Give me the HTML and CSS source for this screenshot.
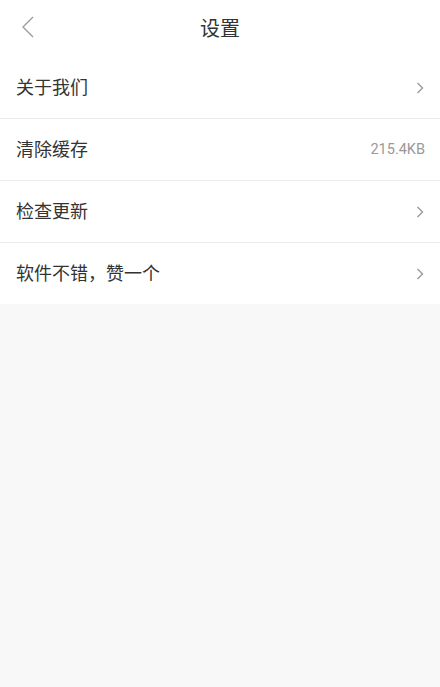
FILE: index.html
```html
<!DOCTYPE html>
<html lang="zh">
<head>
<meta charset="utf-8">
<link rel="stylesheet" href="styles.css">
</head>
<body>
<div class="page">
  <header class="header">
    <span class="back">
      <svg width="12" height="22" viewBox="0 0 12 22"><path d="M11 1 L1 11 L11 21" fill="none" stroke="#999" stroke-width="1.3"/></svg>
    </span>
    <h1 class="title">设置</h1>
  </header>
  <ul class="list">
    <li class="row"><span class="label">关于我们</span><span class="chev"><svg width="8" height="12" viewBox="0 0 8 12"><path d="M1.5 1 L6.5 6 L1.5 11" fill="none" stroke="#9a9a9a" stroke-width="1.4"/></svg></span></li>
    <li class="row"><span class="label">清除缓存</span><span class="value">215.4KB</span></li>
    <li class="row"><span class="label">检查更新</span><span class="chev"><svg width="8" height="12" viewBox="0 0 8 12"><path d="M1.5 1 L6.5 6 L1.5 11" fill="none" stroke="#9a9a9a" stroke-width="1.4"/></svg></span></li>
    <li class="row"><span class="label">软件不错，赞一个</span><span class="chev"><svg width="8" height="12" viewBox="0 0 8 12"><path d="M1.5 1 L6.5 6 L1.5 11" fill="none" stroke="#9a9a9a" stroke-width="1.4"/></svg></span></li>
  </ul>
</div>
</body>
</html>
```
FILE: styles.css
```css
html, body {
  margin: 0;
  padding: 0;
  background: #f8f8f8;
  font-family: Roboto, "Noto Sans CJK SC", sans-serif;
}
.page {
  min-height: 687px;
  background: #f8f8f8;
}
.header {
  height: 57px;
  background: #fff;
  display: flex;
  align-items: center;
  justify-content: center;
  position: relative;
}
.back {
  position: absolute;
  left: 22px;
  top: 16px;
  display: flex;
}
.title {
  margin: 0;
  font-size: 20px;
  font-weight: 400;
  color: #333;
  line-height: 1;
}
.list {
  list-style: none;
  margin: 0;
  padding: 0;
  background: #fff;
}
.row {
  height: 61px;
  display: flex;
  align-items: center;
  justify-content: space-between;
  padding: 0 15px 0 16px;
  border-bottom: 1px solid #ebebeb;
}
.row:last-child {
  border-bottom: none;
}
.label {
  font-size: 18px;
  color: #333;
  margin-bottom: 4px;
}
.value {
  font-size: 14.5px;
  color: #999;
}
.chev {
  display: flex;
  margin-right: 1px;
}
```
